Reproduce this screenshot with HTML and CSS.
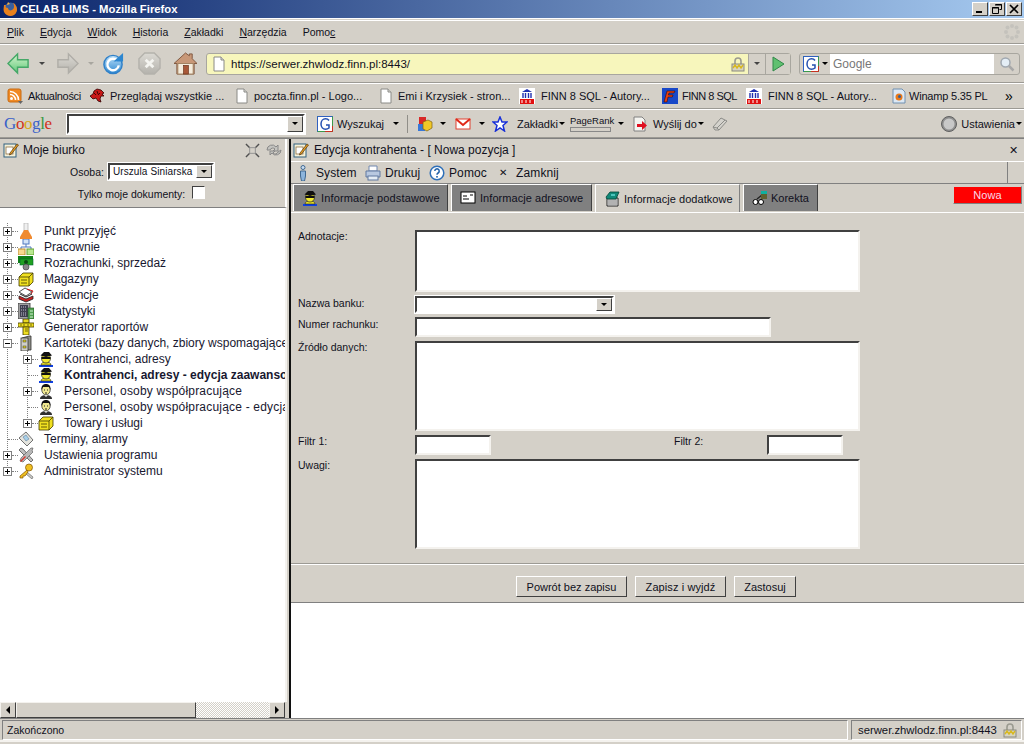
FILE: index.html
```html
<!DOCTYPE html>
<html lang="pl">
<head>
    <meta charset="UTF-8">
    <title>CELAB LIMS - Mozilla Firefox</title>
    <link rel="stylesheet" href="styles.css">
</head>
<body>
    <svg class="icon-defs" width="0" height="0">
        <defs>
            <linearGradient id="gGreen" x1="0" y1="0" x2="0" y2="1"><stop offset="0" stop-color="#d8f5d0"/><stop offset="1" stop-color="#5fc878"/></linearGradient>
            <linearGradient id="gGrey" x1="0" y1="0" x2="0" y2="1"><stop offset="0" stop-color="#dcdad4"/><stop offset="1" stop-color="#b4b2ac"/></linearGradient>
            <linearGradient id="gBlue" x1="0" y1="0" x2="0" y2="1"><stop offset="0" stop-color="#bfe2fa"/><stop offset="1" stop-color="#2c86d0"/></linearGradient>
        </defs>
        <symbol id="i-firefox" viewBox="0 0 16 16"><circle cx="8.5" cy="8" r="6.5" fill="#3a5f9e"/><path d="M2 4c0 2-1 4 0 7 2 4 7 5 10 3 3-2 4-6 2-9-1-2-2-3-3-3 2 3 1 6-1 7-2 1-4 0-4-2-2 0-3-1-2-3C3 4 2.500 4 2 4z" fill="#e8801c"/><path d="M6 1l2 2-3 1z" fill="#f4b040"/></symbol>
        <symbol id="i-page" viewBox="0 0 16 16"><path d="M3 1h7l3 3v11H3z" fill="#fff" stroke="#8a8a86"/><path d="M10 1v3h3" fill="#dcdcd8" stroke="#8a8a86"/></symbol>
        <symbol id="i-lock" viewBox="0 0 16 16"><path d="M5 8V5a3 3 0 0 1 6 0v3" fill="none" stroke="#9a9a90" stroke-width="1.600"/><rect x="2" y="8" width="12" height="7" fill="#d8d4c0" stroke="#8a8a80"/><path d="M3 12l2-3 2 3 2-3 2 3 2-3" fill="none" stroke="#d8b820" stroke-width="1.500"/></symbol>
        <symbol id="i-g" viewBox="0 0 16 16"><rect x=".5" y=".5" width="15" height="15" fill="#fff" stroke="#3a9a4a"/><path d="M.5 15.500V.5h15" fill="none" stroke="#3060c0"/><path d="M15.500 10v5.500H8" fill="none" stroke="#c83020"/><path d="M12 4.500C11 3 9.500 2.800 8.500 2.800 6 2.800 4 5 4 8s2 5.200 4.500 5.200c1.300 0 2.500-.4 3.500-1.200V9H9" fill="none" stroke="#2450b0" stroke-width="1.500"/></symbol>
        <symbol id="i-search" viewBox="0 0 16 16"><circle cx="6.500" cy="6.500" r="4.500" fill="#e4eef6" stroke="#a0a8b0" stroke-width="1.500"/><path d="M10 10l4.500 4.500" stroke="#a8a8a8" stroke-width="2.500"/></symbol>
        <symbol id="i-rss" viewBox="0 0 16 16"><rect x="1" y="1" width="13" height="13" rx="2" fill="#f08a24" stroke="#c86a10"/><circle cx="4.500" cy="10.500" r="1.500" fill="#fff"/><path d="M3 6.500a5.500 5.500 0 0 1 5.500 5.500M3 3.500a8.500 8.500 0 0 1 8.500 8.500" fill="none" stroke="#fff" stroke-width="1.600"/><path d="M11 13h5l-2.500 3z" fill="#666"/></symbol>
        <symbol id="i-dragon" viewBox="0 0 16 16"><path d="M1 8l3-2 1-3 3-2 4 1 3 3-2 1 2 2-3 0-1 3 1 3-3-1-2-3-3 1z" fill="#c81818" stroke="#300" stroke-width=".8"/><path d="M5 5l2 2M8 3l1 3M11 5l-2 2" stroke="#200" stroke-width=".8"/></symbol>
        <symbol id="i-doc" viewBox="0 0 16 16"><rect width="16" height="16" fill="#fff"/><path d="M3 4l5-3 5 3z" fill="#2030b0"/><path d="M4 5v5M6.500 5v5M9.500 5v5M12 5v5" stroke="#2030b0" stroke-width="1.400"/><rect x="1" y="11" width="14" height="5" fill="#e01010"/><path d="M3 12v3M7 12v3M11 12v3" stroke="#fff"/></symbol>
        <symbol id="i-finn" viewBox="0 0 16 16"><rect width="16" height="16" fill="#1848c8"/><path d="M5 3h8l-1 2H7l-.6 2H11l-.6 2H6l-1 5H2z" fill="#e84010" stroke="#200" stroke-width=".5"/></symbol>
        <symbol id="i-winamp" viewBox="0 0 16 16"><path d="M2 1h9l3 3v11H2z" fill="#dce8f4" stroke="#7090b0"/><circle cx="8" cy="9" r="3.500" fill="#e87818"/><circle cx="8.500" cy="8.500" r="1.500" fill="#3060a0"/></symbol>
        <symbol id="i-gmail" viewBox="0 0 16 16"><rect x="1" y="3" width="14" height="10" fill="#fff" stroke="#e04030"/><path d="M1 3l7 6 7-6" fill="none" stroke="#e02818" stroke-width="2"/></symbol>
        <symbol id="i-star" viewBox="0 0 16 16"><path d="M8 1l2 5h5l-4 3.500 1.500 5.500L8 12l-4.500 3L5 9.500 1 6h5z" fill="#fff" stroke="#1830d8" stroke-width="1.500"/></symbol>
        <symbol id="i-blocks" viewBox="0 0 16 16"><rect x="2" y="1" width="7" height="7" fill="#d82828"/><rect x="1" y="8" width="7" height="7" fill="#3878d8"/><path d="M6 6l5-2 4 2v6l-5 3-4-2z" fill="#f0c828" stroke="#806010" stroke-width=".7"/></symbol>
        <symbol id="i-send" viewBox="0 0 16 16"><path d="M2 1h8l3 3v11H2z" fill="#f4f4f0" stroke="#808080"/><path d="M5 8h5V5l5 4.500L10 14v-3H5z" fill="#e01020"/></symbol>
        <symbol id="i-eraser" viewBox="0 0 16 16"><path d="M1 11l8-9 6 3-8 9H3z" fill="#d4d2cc" stroke="#8c8c88"/><path d="M1 11l4 1 2 2M5 12l8-8" fill="none" stroke="#8c8c88"/></symbol>
        <symbol id="i-desk" viewBox="0 0 16 16"><rect x="1" y="2" width="12" height="13" fill="#f4f0d8" stroke="#306080"/><rect x="3" y="5" width="7" height="7" fill="#fff" stroke="#806030" stroke-width=".7"/><path d="M7 11l7-9 1.500 1L8.500 12 6.500 13z" fill="#e8a020" stroke="#503010" stroke-width=".7"/></symbol>
        <symbol id="i-collapse" viewBox="0 0 16 16"><path d="M1 1l4 4M15 1l-4 4M1 15l4-4M15 15l-4-4" stroke="#505050" stroke-width="1.500"/><rect x="5" y="5" width="6" height="6" fill="none" stroke="#909090"/></symbol>
        <symbol id="i-sync" viewBox="0 0 16 16"><path d="M1 8a5 5 0 0 1 9-3l2-2v6H7l2-2a3 3 0 0 0-5 1z" fill="#c4c4c0" stroke="#888"/><path d="M15 8a5 5 0 0 1-9 3l-2 2V9h5l-2 2a3 3 0 0 0 5-1z" fill="#c4c4c0" stroke="#888"/></symbol>
        <symbol id="i-flask" viewBox="0 0 16 16"><rect x="6" y="0" width="4" height="8" fill="#f0f0f0" stroke="#b0b0b0" stroke-width=".7"/><path d="M6 7h4l4 7v2H2v-2z" fill="#f08a30"/></symbol>
        <symbol id="i-org" viewBox="0 0 16 16"><rect x="5" y="0" width="6" height="5" fill="#d4e4f8" stroke="#5078c0"/><path d="M8 5v3M3 8h10v2M3 8v2" fill="none" stroke="#5078c0"/><rect x="0" y="10" width="7" height="6" fill="#f8d890" stroke="#c09030"/><rect x="9" y="10" width="7" height="6" fill="#b8e890" stroke="#60a030"/></symbol>
        <symbol id="i-money" viewBox="0 0 16 16"><rect x="0" y="1" width="15" height="7" fill="#108018"/><rect x="2" y="4" width="13" height="6" fill="#20a020" stroke="#063" stroke-width=".6"/><circle cx="8" cy="7" r="2" fill="#0a4a10"/><circle cx="8" cy="12" r="3" fill="#888" stroke="#444" stroke-width=".7"/></symbol>
        <symbol id="i-box" viewBox="0 0 16 16"><path d="M1 6l4-4h10v9l-4 4H1z" fill="#f0e020" stroke="#403800" stroke-width=".8"/><path d="M1 6h10v9M11 6l4-4M3 9h6M3 12h6" fill="none" stroke="#403800" stroke-width=".8"/></symbol>
        <symbol id="i-ewid" viewBox="0 0 16 16"><path d="M1 5l6-4 7 4-6 4z" fill="#fff" stroke="#222" stroke-width=".8"/><path d="M9 2l6 2-2 3" fill="none" stroke="#d02020"/><path d="M1 9l7 3 7-3v3l-7 3-7-3z" fill="#c82020" stroke="#222" stroke-width=".8"/><path d="M2 7l6 3 6-3" fill="none" stroke="#222"/></symbol>
        <symbol id="i-stats" viewBox="0 0 16 16"><rect x="0" y="0" width="12" height="16" fill="#a0a0a0" stroke="#303030" stroke-width=".8"/><rect x="2" y="2" width="8" height="12" fill="#404050"/><path d="M3 4h6M3 7h6M3 10h6M3 12h6" stroke="#c0c0d0" stroke-dasharray="1 1"/><rect x="10" y="5" width="6" height="11" fill="#50a050" stroke="#205020" stroke-width=".6"/><path d="M12 8h3M12 11h3M12 14h3" stroke="#d0f0d0"/></symbol>
        <symbol id="i-gen" viewBox="0 0 16 16"><rect x="5" y="0" width="6" height="4" fill="#e8d820" stroke="#403800" stroke-width=".8"/><rect x="0" y="4" width="16" height="4" fill="#f0e020" stroke="#403800" stroke-width=".8"/><rect x="5" y="8" width="6" height="8" fill="#f0e020" stroke="#403800" stroke-width=".8"/><path d="M7 10h3M7 12h3M3 5v2M6 5v2M10 5v2M13 5v2" stroke="#403800" stroke-width=".7"/></symbol>
        <symbol id="i-cab" viewBox="0 0 16 16"><path d="M4 3l7-2h2v14H4z" fill="#909088" stroke="#303030" stroke-width=".8"/><rect x="3" y="3" width="7" height="13" fill="#d0d0c8" stroke="#303030" stroke-width=".8"/><rect x="5" y="5" width="3" height="2" fill="#e8d820" stroke="#303030" stroke-width=".5"/><rect x="5" y="11" width="3" height="2" fill="#e8d820" stroke="#303030" stroke-width=".5"/></symbol>
        <symbol id="i-agent" viewBox="0 0 16 16"><rect x="1" y="14" width="14" height="2" fill="#1040e0"/><path d="M3 14c0-2 2-3 5-3s5 1 5 3z" fill="#e8e020" stroke="#222" stroke-width=".6"/><ellipse cx="8" cy="7.500" rx="4.500" ry="4.500" fill="#f0e830" stroke="#222" stroke-width=".7"/><path d="M2.500 4.500L6 1h5l3 3.500-6 1.500z" fill="#101010"/><rect x="3.500" y="6" width="9" height="2" fill="#101010"/></symbol>
        <symbol id="i-person" viewBox="0 0 16 16"><path d="M2 16c0-3 3-4 6-4s6 1 6 4z" fill="#303030"/><path d="M6 12l2 2 2-2z" fill="#f4f4f0"/><ellipse cx="8" cy="7" rx="4.200" ry="4.800" fill="#f0e890" stroke="#222" stroke-width=".7"/><path d="M3.500 7C3 3 5 1 8 1s5 2 4.500 6L11 4H5z" fill="#101010"/><path d="M6 7h1M9 7h1M7 10h2" stroke="#222"/></symbol>
        <symbol id="i-calc" viewBox="0 0 16 16"><path d="M1 7l7-6 7 8-6 6z" fill="#e4e4de" stroke="#707070"/><path d="M5 6l3-2 3 4-3 2z" fill="#a8d0e8" stroke="#6080a0" stroke-width=".6"/></symbol>
        <symbol id="i-tools" viewBox="0 0 16 16"><path d="M1 3l2-2 2 1 10 11-2 2L3 5z" fill="#c0c0c0" stroke="#505050" stroke-width=".8"/><path d="M15 1l-1 3 1 1-10 10-3-1 1-3L13 1z" fill="#b8b8b8" stroke="#505050" stroke-width=".6"/><path d="M7 9l-5 5 1 1 5-5z" fill="#d83830"/></symbol>
        <symbol id="i-key" viewBox="0 0 16 16"><path d="M9 9l6 5-1 2-6-5z" fill="#c8c8c4" stroke="#707070" stroke-width=".7"/><circle cx="11" cy="4.500" r="3.500" fill="#f0c020" stroke="#805000" stroke-width=".7"/><path d="M9 7L2 13v2h3v-2h2l3-4z" fill="#f0c020" stroke="#805000" stroke-width=".7"/></symbol>
        <symbol id="i-user" viewBox="0 0 16 16"><circle cx="8" cy="2.500" r="2" fill="#c8dcf0" stroke="#406890"/><path d="M5.500 6h5v5l-1 5h-3l-1-5z" fill="#8cb4dc" stroke="#406890"/></symbol>
        <symbol id="i-print" viewBox="0 0 16 16"><path d="M4 1h8v5H4z" fill="#fff" stroke="#7088b0"/><path d="M1 6h14v6H1z" fill="#b8c8e0" stroke="#6078a0"/><rect x="3" y="11" width="10" height="4" fill="#e4ecf4" stroke="#6078a0"/></symbol>
        <symbol id="i-help" viewBox="0 0 16 16"><circle cx="8" cy="8" r="6.800" fill="#fff" stroke="#3070b8" stroke-width="1.500"/><path d="M5.800 6a2.200 2.200 0 1 1 3.300 2c-.8.500-1.100.8-1.100 1.700" fill="none" stroke="#2060a8" stroke-width="1.500"/><rect x="7.200" y="11" width="1.600" height="1.600" fill="#2060a8"/></symbol>
        <symbol id="i-card" viewBox="0 0 16 16"><rect x="1" y="2" width="14" height="11" fill="#fff" stroke="#000"/><path d="M3 6h4M3 9h6M10 5h3" stroke="#000"/></symbol>
        <symbol id="i-book" viewBox="0 0 16 16"><path d="M3 7h11v8H3z" fill="#fff" stroke="#222"/><path d="M4 9h9M4 11h9M4 13h9" stroke="#222" stroke-width=".7"/><path d="M2 6l4-5h9l-3 7H3z" fill="#108878" stroke="#043" stroke-width=".8"/><path d="M7 4h4" stroke="#8ff"/></symbol>
        <symbol id="i-fix" viewBox="0 0 16 16"><circle cx="3.500" cy="12" r="2.500" fill="#fff" stroke="#000"/><circle cx="9" cy="12" r="2.500" fill="#fff" stroke="#000"/><path d="M5 9l5-4" stroke="#222" stroke-width="1.500"/><rect x="9" y="1" width="6" height="3" fill="#10b0a0"/><rect x="9" y="4" width="6" height="5" fill="#606030"/></symbol>
    </svg>

    <div class="titlebar">
        <svg class="ico16"><use href="#i-firefox"/></svg>
        <span class="title-text">CELAB LIMS - Mozilla Firefox</span>
        <div class="win-btns">
            <span class="win-btn"><svg width="10" height="10" viewBox="0 0 10 10"><rect x="1" y="7" width="6" height="2"/></svg></span>
            <span class="win-btn"><svg width="10" height="10" viewBox="0 0 10 10"><path d="M3.500.5h6v5h-2M.5 3.500h6v6h-6z" fill="none" stroke="#000"/><path d="M3 1h7M0 4h7" stroke="#000"/></svg></span>
            <span class="win-btn"><svg width="10" height="10" viewBox="0 0 10 10"><path d="M1 1l8 8M9 1l-8 8" stroke="#000" stroke-width="1.700"/></svg></span>
        </div>
    </div>

    <div class="menubar">
        <span class="menu-plik"><u>P</u>lik</span>
        <span><u>E</u>dycja</span>
        <span><u>W</u>idok</span>
        <span><u>H</u>istoria</span>
        <span><u>Z</u>akładki</span>
        <span><u>N</u>arzędzia</span>
        <span>Pomo<u>c</u></span>
        <svg class="throbber" viewBox="0 0 16 16"><g fill="#c4c2bc"><circle cx="8" cy="2" r="2"/><circle cx="12.500" cy="3.500" r="2"/><circle cx="14" cy="8" r="2"/><circle cx="12.500" cy="12.500" r="2"/><circle cx="8" cy="14" r="2"/><circle cx="3.500" cy="12.500" r="2"/><circle cx="2" cy="8" r="2"/><circle cx="3.500" cy="3.500" r="2"/></g></svg>
    </div>

    <div class="navbar">
        <svg class="nav-ico back" viewBox="0 0 24 24"><path d="M1 12L11 2v6h11v8H11v6z" fill="url(#gGreen)" stroke="#46a868" stroke-width="1.500"/></svg>
        <i class="drop"></i>
        <svg class="nav-ico fwd" viewBox="0 0 24 24"><path d="M23 12L13 2v6H2v8h11v6z" fill="url(#gGrey)" stroke="#b0aea8" stroke-width="1.500"/></svg>
        <i class="drop drop-off"></i>
        <svg class="nav-ico reload" viewBox="0 0 24 24"><circle cx="11.500" cy="13" r="9.500" fill="url(#gBlue)" stroke="#3080c8" stroke-width="1.500"/><path d="M16 9a6 6 0 1 0 1.500 5" fill="none" stroke="#fff" stroke-width="2.500"/><path d="M12 10h10V1z" fill="#2c86d0"/></svg>
        <svg class="nav-ico stop" viewBox="0 0 24 24"><path d="M7 1h10l6 6v10l-6 6H7l-6-6V7z" fill="url(#gGrey)" stroke="#b4b2ac" stroke-width="1.500"/><path d="M8 8l8 8M16 8l-8 8" stroke="#f4f4f0" stroke-width="3"/></svg>
        <svg class="nav-ico home" viewBox="0 0 24 24"><path d="M12 1L0 12h3v11h18V12h3l-5-5V2h-3v2z" fill="#c89878" stroke="#805840"/><rect x="4" y="12" width="16" height="11" fill="#f4ecdc" stroke="#a08060"/><rect x="10" y="14" width="5" height="9" fill="#a85838" stroke="#683018" stroke-width=".7"/></svg>
        <div class="urlbar">
            <svg class="ico16"><use href="#i-page"/></svg>
            <span class="url-text">https://serwer.zhwlodz.finn.pl:8443/</span>
            <svg class="ico16 url-lock"><use href="#i-lock"/></svg>
            <span class="url-drop"><i class="drop"></i></span>
            <span class="url-go"><svg viewBox="0 0 16 16" width="16" height="16"><path d="M3 1l11 7-11 7z" fill="#60c070" stroke="#308848"/></svg></span>
        </div>
        <div class="searchbar">
            <span class="search-engine"><svg class="ico16"><use href="#i-g"/></svg><i class="drop drop-dark"></i></span>
            <span class="search-input">Google</span>
            <span class="search-go"><svg class="ico16"><use href="#i-search"/></svg></span>
        </div>
    </div>

    <div class="bookmarks">
        <span class="bm bm-1"><svg class="ico16"><use href="#i-rss"/></svg>Aktualności</span>
        <span class="bm bm-2"><svg class="ico16"><use href="#i-dragon"/></svg>Przeglądaj wszystkie ...</span>
        <span class="bm bm-3"><svg class="ico16"><use href="#i-page"/></svg>poczta.finn.pl - Logo...</span>
        <span class="bm bm-4"><svg class="ico16"><use href="#i-page"/></svg>Emi i Krzysiek - stron...</span>
        <span class="bm bm-5"><svg class="ico16"><use href="#i-doc"/></svg>FINN 8 SQL - Autory...</span>
        <span class="bm bm-6"><svg class="ico16"><use href="#i-finn"/></svg>FINN 8 SQL</span>
        <span class="bm bm-7"><svg class="ico16"><use href="#i-doc"/></svg>FINN 8 SQL - Autory...</span>
        <span class="bm bm-8"><svg class="ico16"><use href="#i-winamp"/></svg>Winamp 5.35 PL</span>
        <span class="bm-more">»</span>
    </div>

    <div class="googlebar">
        <span class="google-logo"><b class="c-b">G</b><b class="c-r">o</b><b class="c-y">o</b><b class="c-b">g</b><b class="c-g">l</b><b class="c-r">e</b></span>
        <div class="combo combo-google"><span class="combo-text"></span><span class="combo-btn"><i class="drop drop-dark"></i></span></div>
        <svg class="ico16 gb-g"><use href="#i-g"/></svg>
        <span class="gb-label gb-search">Wyszukaj</span>
        <i class="drop drop-dark gb-d1"></i>
        <span class="gb-sep"></span>
        <svg class="ico16 gb-blocks"><use href="#i-blocks"/></svg>
        <i class="drop drop-dark gb-d2"></i>
        <svg class="ico16 gb-mail"><use href="#i-gmail"/></svg>
        <i class="drop drop-dark gb-d3"></i>
        <svg class="ico16 gb-star"><use href="#i-star"/></svg>
        <span class="gb-label gb-book">Zakładki</span><i class="drop drop-dark gb-d4"></i>
        <span class="pagerank">PageRank<i class="pr-bar"></i></span>
        <i class="drop drop-dark gb-d5"></i>
        <svg class="ico16 gb-send"><use href="#i-send"/></svg>
        <span class="gb-label gb-sendto">Wyślij do</span><i class="drop drop-dark gb-d4"></i>
        <svg class="ico16 gb-erase"><use href="#i-eraser"/></svg>
        <svg class="ico16 gb-gear" viewBox="0 0 16 16"><circle cx="8" cy="8" r="7.500" fill="#909090" stroke="#606060"/><circle cx="8" cy="8" r="5.500" fill="#c8c8c8"/></svg>
        <span class="gb-label">Ustawienia</span><i class="drop drop-dark gb-d4 gb-last"></i>
    </div>

    <div class="app">
        <aside class="side">
            <div class="side-head">
                <div class="side-title">
                    <svg class="ico16"><use href="#i-desk"/></svg>
                    <span>Moje biurko</span>
                    <svg class="ico16 side-a"><use href="#i-collapse"/></svg>
                    <svg class="ico16 side-b"><use href="#i-sync"/></svg>
                </div>
                <div class="side-person">
                    <span>Osoba:</span>
                    <div class="combo combo-person"><span class="combo-text">Urszula Siniarska</span><span class="combo-btn"><i class="drop drop-dark"></i></span></div>
                </div>
                <div class="side-check">
                    <span>Tylko moje dokumenty:</span>
                    <input class="checkbox" type="checkbox">
                </div>
            </div>
            <div class="tree">
                <div class="node l1"><i class="exp"></i><i class="stub"></i><svg class="ico16"><use href="#i-flask"/></svg><span>Punkt przyjęć</span></div>
                <div class="node l1"><i class="exp"></i><i class="stub"></i><svg class="ico16"><use href="#i-org"/></svg><span>Pracownie</span></div>
                <div class="node l1"><i class="exp"></i><i class="stub"></i><svg class="ico16"><use href="#i-money"/></svg><span>Rozrachunki, sprzedaż</span></div>
                <div class="node l1"><i class="exp"></i><i class="stub"></i><svg class="ico16"><use href="#i-box"/></svg><span>Magazyny</span></div>
                <div class="node l1"><i class="exp"></i><i class="stub"></i><svg class="ico16"><use href="#i-ewid"/></svg><span>Ewidencje</span></div>
                <div class="node l1"><i class="exp"></i><i class="stub"></i><svg class="ico16"><use href="#i-stats"/></svg><span>Statystyki</span></div>
                <div class="node l1"><i class="exp"></i><i class="stub"></i><svg class="ico16"><use href="#i-gen"/></svg><span>Generator raportów</span></div>
                <div class="node l1"><i class="exp exp-open"></i><i class="stub"></i><svg class="ico16"><use href="#i-cab"/></svg><span>Kartoteki (bazy danych, zbiory wspomagające)</span></div>
                <div class="node l2"><i class="exp"></i><i class="stub"></i><svg class="ico16"><use href="#i-agent"/></svg><span>Kontrahenci, adresy</span></div>
                <div class="node l2"><i class="exp-none"></i><i class="stub stub-long"></i><svg class="ico16"><use href="#i-agent"/></svg><span class="bold">Kontrahenci, adresy - edycja zaawansowana</span></div>
                <div class="node l2"><i class="exp"></i><i class="stub"></i><svg class="ico16"><use href="#i-person"/></svg><span class="wide">Personel, osoby współpracujące</span></div>
                <div class="node l2"><i class="exp-none"></i><i class="stub stub-long"></i><svg class="ico16"><use href="#i-person"/></svg><span class="wide">Personel, osoby współpracujące - edycja</span></div>
                <div class="node l2 l2-last"><i class="exp"></i><i class="stub"></i><svg class="ico16"><use href="#i-box"/></svg><span>Towary i usługi</span></div>
                <div class="node l1"><i class="exp-none"></i><i class="stub stub-long"></i><svg class="ico16"><use href="#i-calc"/></svg><span>Terminy, alarmy</span></div>
                <div class="node l1"><i class="exp"></i><i class="stub"></i><svg class="ico16"><use href="#i-tools"/></svg><span>Ustawienia programu</span></div>
                <div class="node l1-last"><i class="exp"></i><i class="stub"></i><svg class="ico16"><use href="#i-key"/></svg><span>Administrator systemu</span></div>
            </div>
            <div class="hscroll">
                <span class="sb-btn"><i class="arrow-left"></i></span>
                <span class="sb-thumb"></span>
                <span class="sb-track"></span>
                <span class="sb-btn"><i class="arrow-right"></i></span>
            </div>
        </aside>

        <main class="main">
            <div class="main-panel">
                <div class="main-title">
                    <svg class="ico16"><use href="#i-desk"/></svg>
                    <span>Edycja kontrahenta - [ Nowa pozycja ]</span>
                    <span class="main-close">✕</span>
                </div>
                <div class="main-tools">
                    <div class="tools-inner">
                        <span class="tool tool-sys"><svg class="ico16"><use href="#i-user"/></svg>System</span>
                        <span class="tool tool-print"><svg class="ico16"><use href="#i-print"/></svg>Drukuj</span>
                        <span class="tool tool-help"><svg class="ico16"><use href="#i-help"/></svg>Pomoc</span>
                        <span class="tool tool-close"><i class="x">✕</i>Zamknij</span>
                    </div>
                </div>
                <div class="tabs">
                    <span class="tab tab-1"><svg class="ico16"><use href="#i-agent"/></svg>Informacje podstawowe</span>
                    <span class="tab tab-2"><svg class="ico16"><use href="#i-card"/></svg>Informacje adresowe</span>
                    <span class="tab tab-3 active"><svg class="ico16"><use href="#i-book"/></svg>Informacje dodatkowe</span>
                    <span class="tab tab-4"><svg class="ico16"><use href="#i-fix"/></svg>Korekta</span>
                    <span class="status-badge">Nowa</span>
                </div>
                <div class="form">
                    <label>Adnotacje:</label>
                    <textarea class="field ta-1"></textarea>
                    <label class="lbl-mid">Nazwa banku:</label>
                    <div class="combo combo-bank"><span class="combo-text"></span><span class="combo-btn"><i class="drop drop-dark"></i></span></div>
                    <label class="lbl-mid">Numer rachunku:</label>
                    <input class="field in-account" type="text">
                    <label>Źródło danych:</label>
                    <textarea class="field ta-2"></textarea>
                    <label>Filtr 1:</label>
                    <div class="filter-row">
                        <input class="field in-filter" type="text">
                        <label class="lbl-filter2">Filtr 2:</label>
                        <input class="field in-filter" type="text">
                    </div>
                    <label>Uwagi:</label>
                    <textarea class="field ta-3"></textarea>
                </div>
                <div class="form-actions">
                    <button class="btn btn-back">Powrót bez zapisu</button>
                    <button class="btn btn-save">Zapisz i wyjdź</button>
                    <button class="btn btn-apply">Zastosuj</button>
                </div>
            </div>
        </main>
    </div>

    <div class="statusbar">
        <span class="status-left">Zakończono</span>
        <span class="status-right">serwer.zhwlodz.finn.pl:8443<svg class="ico16"><use href="#i-lock"/></svg></span>
    </div>
</body>
</html>
```

FILE: styles.css
```css
* {
    margin: 0;
    padding: 0;
    box-sizing: border-box;
}

html, body {
    width: 1024px;
    height: 744px;
    overflow: hidden;
}

body {
    display: flex;
    flex-direction: column;
    background: #d4d0c8;
    color: #101020;
    font-family: 'Liberation Sans', Arial, sans-serif;
    font-size: 12px;
}

i {
    font-style: normal;
    display: inline-block;
}

.icon-defs {
    position: absolute;
}

.ico16 {
    width: 16px;
    height: 16px;
    flex: none;
}

.drop {
    width: 0;
    height: 0;
    flex: none;
    border-left: 3px solid transparent;
    border-right: 3px solid transparent;
    border-top: 3px solid #444;
}

.drop-off {
    border-top-color: #a8a69f;
}

.drop-dark {
    border-top-color: #000;
}

/* window title */
.titlebar {
    height: 18px;
    flex: none;
    display: flex;
    align-items: center;
    padding-left: 2px;
    gap: 2px;
    background: linear-gradient(90deg, #0a246a 0%, #a6caf0 100%);
    color: #fff;
    font: bold 11.300px 'Liberation Sans', Arial, sans-serif;
}

.title-text {
    flex: 1;
}

.win-btns {
    display: flex;
    gap: 1px;
    padding-right: 2px;
}

.win-btn {
    width: 16px;
    height: 14px;
    display: flex;
    align-items: center;
    justify-content: center;
    background: #d4d0c8;
    border: 1px solid;
    border-color: #fff #404040 #404040 #fff;
}

/* browser chrome rows */
.menubar {
    height: 26px;
    flex: none;
    display: flex;
    align-items: center;
    border-top: 3px double #fff;
    border-bottom: 1px solid #9c9a94;
    padding-left: 7px;
    gap: 16px;
    font-size: 10.500px;
}

.throbber {
    width: 16px;
    height: 16px;
    margin-left: auto;
    margin-right: 4px;
}

.navbar {
    height: 39px;
    flex: none;
    display: flex;
    align-items: center;
    position: relative;
    border-top: 1px solid #fff;
    border-bottom: 1px solid #9c9a94;
    padding-left: 7px;
}

.nav-ico {
    width: 23px;
    height: 23px;
    flex: none;
}

.navbar > .drop {
    margin: 0 11px 0 9px;
}

.navbar .reload {
    margin-left: -3px;
}

.navbar .stop {
    margin-left: 13px;
}

.navbar .home {
    margin-left: 13px;
}

.urlbar {
    width: 585px;
    height: 22px;
    margin-left: 9px;
    display: flex;
    align-items: center;
    background: #f7f6bc;
    border: 1px solid #a8a69f;
    border-radius: 3px;
    padding-left: 4px;
}

.url-text {
    flex: 1;
    margin-left: 4px;
    font-size: 11.500px;
}

.url-lock {
    margin-right: 2px;
}

.url-drop, .url-go {
    height: 20px;
    display: flex;
    align-items: center;
    justify-content: center;
    background: #d4d0c8;
    border-left: 1px solid #a8a69f;
}

.url-drop {
    width: 17px;
}

.url-go {
    width: 25px;
}

.searchbar {
    width: 221px;
    height: 22px;
    margin-left: 8px;
    display: flex;
    align-items: center;
    border: 1px solid #a8a69f;
    border-radius: 3px;
}

.search-engine {
    width: 30px;
    display: flex;
    align-items: center;
    gap: 3px;
    padding-left: 3px;
}

.search-input {
    width: 164px;
    height: 20px;
    display: flex;
    align-items: center;
    padding-left: 3px;
    background: #fff;
    color: #777;
}

.search-go {
    flex: 1;
    display: flex;
    justify-content: center;
}

.bookmarks {
    height: 26px;
    flex: none;
    display: flex;
    align-items: center;
    border-top: 1px solid #fff;
    border-bottom: 1px solid #9c9a94;
    padding-left: 7px;
    font-size: 11px;
}

.bm {
    display: flex;
    align-items: center;
    gap: 5px;
    white-space: nowrap;
}

.bm-1 { width: 82px; letter-spacing: -.3px; }
.bm-2 { width: 145px; }
.bm-3 { width: 144px; gap: 4px; }
.bm-4 { width: 141px; gap: 4px; }
.bm-5 { width: 143px; gap: 6px; }
.bm-6 { width: 84px; gap: 4px; letter-spacing: -.5px; }
.bm-7 { width: 145px; gap: 6px; }
.bm-8 { width: 113px; gap: 2px; letter-spacing: -.2px; }

.bm-more {
    font-size: 14px;
    margin-left: 1px;
    color: #000;
}

.googlebar {
    height: 29px;
    flex: none;
    display: flex;
    align-items: center;
    border-top: 1px solid #fff;
    border-bottom: 1px solid #9c9a94;
    padding-left: 4px;
    font-size: 11px;
    white-space: nowrap;
}

.google-logo {
    width: 63px;
    font: 17px 'Liberation Serif', serif;
    letter-spacing: -.4px;
}

.google-logo b {
    font-weight: normal;
}

.c-b { color: #3a62c8; }
.c-r { color: #d03020; }
.c-y { color: #d8a818; }
.c-g { color: #389840; }

/* sunken combo used by all dropdowns */
.combo {
    display: flex;
    align-items: center;
    background: #fff;
    border: 2px solid;
    border-color: #404040 #fff #fff #404040;
    outline: 1px solid #fff;
}

.combo-text {
    flex: 1;
    padding-left: 3px;
    white-space: nowrap;
    overflow: hidden;
}

.combo-btn {
    width: 16px;
    align-self: stretch;
    display: flex;
    align-items: center;
    justify-content: center;
    background: #d4d0c8;
    border: 1px solid;
    border-color: #fff #404040 #404040 #fff;
}

.combo-google {
    width: 238px;
    height: 20px;
}

.gb-g { margin-left: 12px; }
.gb-search { margin-left: 4px; }
.gb-d1 { margin-left: 9px; }

.gb-sep {
    width: 1px;
    height: 18px;
    margin: 0 8px;
    background: #908e88;
}

.gb-d2 { margin-left: 7px; }
.gb-blocks { margin-left: 1px; }
.gb-mail { margin-left: 9px; }
.gb-d3 { margin-left: 8px; }
.gb-star { margin-left: 7px; }
.gb-book { margin-left: 9px; }
.gb-d4 { margin-left: 1px; }

.pagerank {
    display: flex;
    flex-direction: column;
    margin-left: 5px;
    font-size: 9.500px;
    line-height: 11px;
    width: 44px;
}

.pr-bar {
    width: 41px;
    height: 5px;
    margin-top: 1px;
    border: 1px solid #888;
}

.gb-d5 { margin-left: 4px; }
.gb-send { margin-left: 8px; }
.gb-sendto { margin-left: 5px; }
.gb-erase { margin-left: 8px; }
.gb-gear { margin-left: auto; margin-right: 4px; }
.gb-last { margin-right: 2px; }

/* application area */
.app {
    flex: 1;
    min-height: 0;
    display: flex;
    border-top: 1px solid #808080;
}

.side {
    width: 291px;
    flex: none;
    display: flex;
    flex-direction: column;
    padding-right: 2px;
    border-right: 2px solid #101010;
}

.side-head {
    height: 69px;
    flex: none;
    border-bottom: 1px solid #808080;
    border-right: 2px solid #fff;
    font-size: 10.500px;
}

.side-title {
    display: flex;
    align-items: center;
    height: 22px;
    padding-left: 3px;
    gap: 4px;
    font-size: 12px;
}

.side-a { margin-left: auto; width: 15px; height: 15px; }
.side-b { margin-left: 2px; margin-right: 3px; }

.side-person {
    display: flex;
    align-items: center;
    justify-content: center;
    height: 21px;
    gap: 4px;
    padding-right: 1px;
}

.combo-person {
    width: 106px;
    height: 17px;
}

.combo-person .combo-text {
    font-size: 10px;
    letter-spacing: .1px;
}

.side-check {
    display: flex;
    align-items: center;
    justify-content: center;
    gap: 7px;
    height: 24px;
    padding-right: 2px;
}

.checkbox {
    appearance: none;
    width: 13px;
    height: 13px;
    background: #fff;
    border: 1px solid;
    border-color: #404040 #fff #fff #404040;
    margin-top: -3px;
}

.tree {
    flex: 1;
    min-height: 0;
    background: #fff;
    padding-top: 15px;
    overflow: hidden;
    border-right: 2px solid #f4f2ee;
}

.node {
    height: 16px;
    display: flex;
    align-items: center;
    white-space: nowrap;
    padding-left: 3px;
    color: #181830;
}

.node span {
    margin-left: 10px;
}

.bold {
    font-weight: bold;
}

.wide {
    letter-spacing: .2px;
}

.l1 {
    background: repeating-linear-gradient(#808080 0 1px, transparent 1px 2px) 7px 0 / 1px 100% no-repeat;
}

.l1-last {
    background: repeating-linear-gradient(#808080 0 1px, transparent 1px 2px) 7px 0 / 1px 8px no-repeat;
}

.l2 {
    padding-left: 23px;
    background:
        repeating-linear-gradient(#808080 0 1px, transparent 1px 2px) 7px 0 / 1px 100% no-repeat,
        repeating-linear-gradient(#808080 0 1px, transparent 1px 2px) 27px 0 / 1px 100% no-repeat;
}

.l2-last {
    background:
        repeating-linear-gradient(#808080 0 1px, transparent 1px 2px) 7px 0 / 1px 100% no-repeat,
        repeating-linear-gradient(#808080 0 1px, transparent 1px 2px) 27px 0 / 1px 8px no-repeat;
}

.exp, .exp-none {
    width: 9px;
    height: 9px;
    flex: none;
    position: relative;
}

.exp {
    background: #fff;
    border: 1px solid #808080;
}

/* plus and minus marks inside the expander box */
.exp::before {
    content: '';
    position: absolute;
    left: 1px;
    top: 3px;
    width: 5px;
    height: 1px;
    background: #000;
}

.exp::after {
    content: '';
    position: absolute;
    left: 3px;
    top: 1px;
    width: 1px;
    height: 5px;
    background: #000;
}

.exp-open::after {
    display: none;
}

.stub {
    width: 6px;
    flex: none;
    border-top: 1px dotted #808080;
}

.exp-none {
    width: 5px;
}

.stub-long {
    width: 10px;
}

.hscroll {
    height: 16px;
    flex: none;
    display: flex;
    margin-right: 2px;
    background: #f4f2ee;
}

.sb-btn, .sb-thumb {
    background: #d4d0c8;
    border: 1px solid;
    border-color: #f4f2ee #404040 #404040 #f4f2ee;
}

.sb-btn {
    width: 16px;
    display: flex;
    align-items: center;
    justify-content: center;
}

.sb-thumb {
    width: 180px;
}

.sb-track {
    flex: 1;
    background: repeating-conic-gradient(#d4d0c8 0 25%, #fff 0 50%) 0 0 / 2px 2px;
}

.arrow-left, .arrow-right {
    width: 0;
    height: 0;
    border-top: 4px solid transparent;
    border-bottom: 4px solid transparent;
}

.arrow-left { border-right: 4px solid #000; }
.arrow-right { border-left: 4px solid #000; }

.main {
    flex: 1;
    min-width: 0;
    background: #fff;
}

.main-panel {
    height: 464px;
    background: #d4d0c8;
    border-bottom: 1px solid #808080;
}

.main-title {
    height: 22px;
    display: flex;
    align-items: center;
    padding-left: 2px;
    gap: 5px;
    font-size: 12px;
}

.main-close {
    margin-left: auto;
    margin-right: 6px;
    font-size: 11px;
}

.main-tools {
    height: 23px;
    border-top: 1px solid #fff;
    border-bottom: 1px solid #808080;
}

.tools-inner {
    width: 717px;
    height: 21px;
    display: flex;
    align-items: center;
    padding-left: 4px;
    border-right: 1px solid #808080;
    letter-spacing: .1px;
}

.tool {
    display: flex;
    align-items: center;
    gap: 4px;
}

.tool-sys { width: 70px; gap: 5px; }
.tool-print { width: 64px; gap: 4px; }
.tool-help { width: 70px; }
.tool-close .x { font-size: 10px; margin-right: 5px; }

.tabs {
    height: 29px;
    display: flex;
    align-items: flex-start;
    padding: 0 2px;
    border-bottom: 1px solid #fff;
    font-size: 11px;
    letter-spacing: .05px;
    white-space: nowrap;
}

.tab {
    height: 27px;
    display: flex;
    align-items: center;
    gap: 3px;
    padding-left: 8px;
    background: #808080;
    border-left: 1px solid #fff;
    border-top: 1px solid #fff;
    border-right: 1px solid #404040;
    color: #101020;
}

.tab.active {
    height: 28px;
    background: #d4d0c8;
    border-color: #fff #808080 #d4d0c8 #fff;
}

.tab-1 { width: 155px; margin-right: 3px; letter-spacing: .15px; }
.tab-2 { width: 141px; margin-right: 3px; gap: 4px; }
.tab-3 { width: 145px; margin-right: 3px; gap: 4px; }
.tab-4 { width: 75px; gap: 3px; letter-spacing: 0; }

.status-badge {
    width: 69px;
    height: 18px;
    margin: 2px 0 0 auto;
    background: #f00;
    color: #f8d8e8;
    font-size: 11px;
    text-align: center;
    line-height: 17px;
    border: 1px solid;
    border-color: #d4d0c8 #808080 #808080 #d4d0c8;
}

.form {
    display: grid;
    grid-template-columns: 117px 1fr;
    row-gap: 4px;
    padding: 17px 0 0 7px;
    font-size: 10.500px;
    align-items: start;
}

.form .lbl-mid {
    padding-top: 1px;
}

.field {
    display: block;
    background: #fff;
    border: 2px solid;
    border-color: #404040 #f4f2ee #f4f2ee #404040;
    outline: none;
    resize: none;
}

.ta-1 { width: 445px; height: 62px; }
.ta-2 { width: 445px; height: 90px; }
.ta-3 { width: 445px; height: 90px; }
.in-account { width: 356px; height: 20px; }
.in-filter { width: 76px; height: 20px; }

.combo-bank {
    width: 199px;
    height: 17px;
}

.filter-row {
    display: flex;
    align-items: flex-start;
}

.form .lbl-filter2 {
    width: 93px;
    margin-left: 183px;
}

.form-actions {
    margin-top: 14px;
    border-top: 1px solid #9c9a94;
    box-shadow: inset 0 1px 0 #fff;
    display: flex;
    padding: 12px 0 0 225px;
    gap: 8px;
}

.btn {
    height: 21px;
    background: #d4d0c8;
    border: 1px solid;
    border-color: #fff #404040 #404040 #fff;
    font: 11px 'Liberation Sans', Arial, sans-serif;
    color: #101020;
}

.btn-back { width: 111px; }
.btn-save { width: 91px; letter-spacing: .1px; }
.btn-apply { width: 62px; }

.statusbar {
    height: 24px;
    flex: none;
    display: flex;
    margin-bottom: 2px;
    border-top: 1px solid #808080;
    border-bottom: 2px solid #f4f2ee;
    font-size: 10.500px;
    padding: 1px 2px 0 2px;
    gap: 3px;
}

.status-left, .status-right {
    display: flex;
    align-items: center;
    border: 1px solid;
    border-color: #808080 #fff #fff #808080;
    padding-left: 4px;
}

.status-left {
    flex: 1;
}

.status-right {
    width: 171px;
    justify-content: space-between;
    padding: 0 3px 0 6px;
    font-size: 11.300px;
}
```
